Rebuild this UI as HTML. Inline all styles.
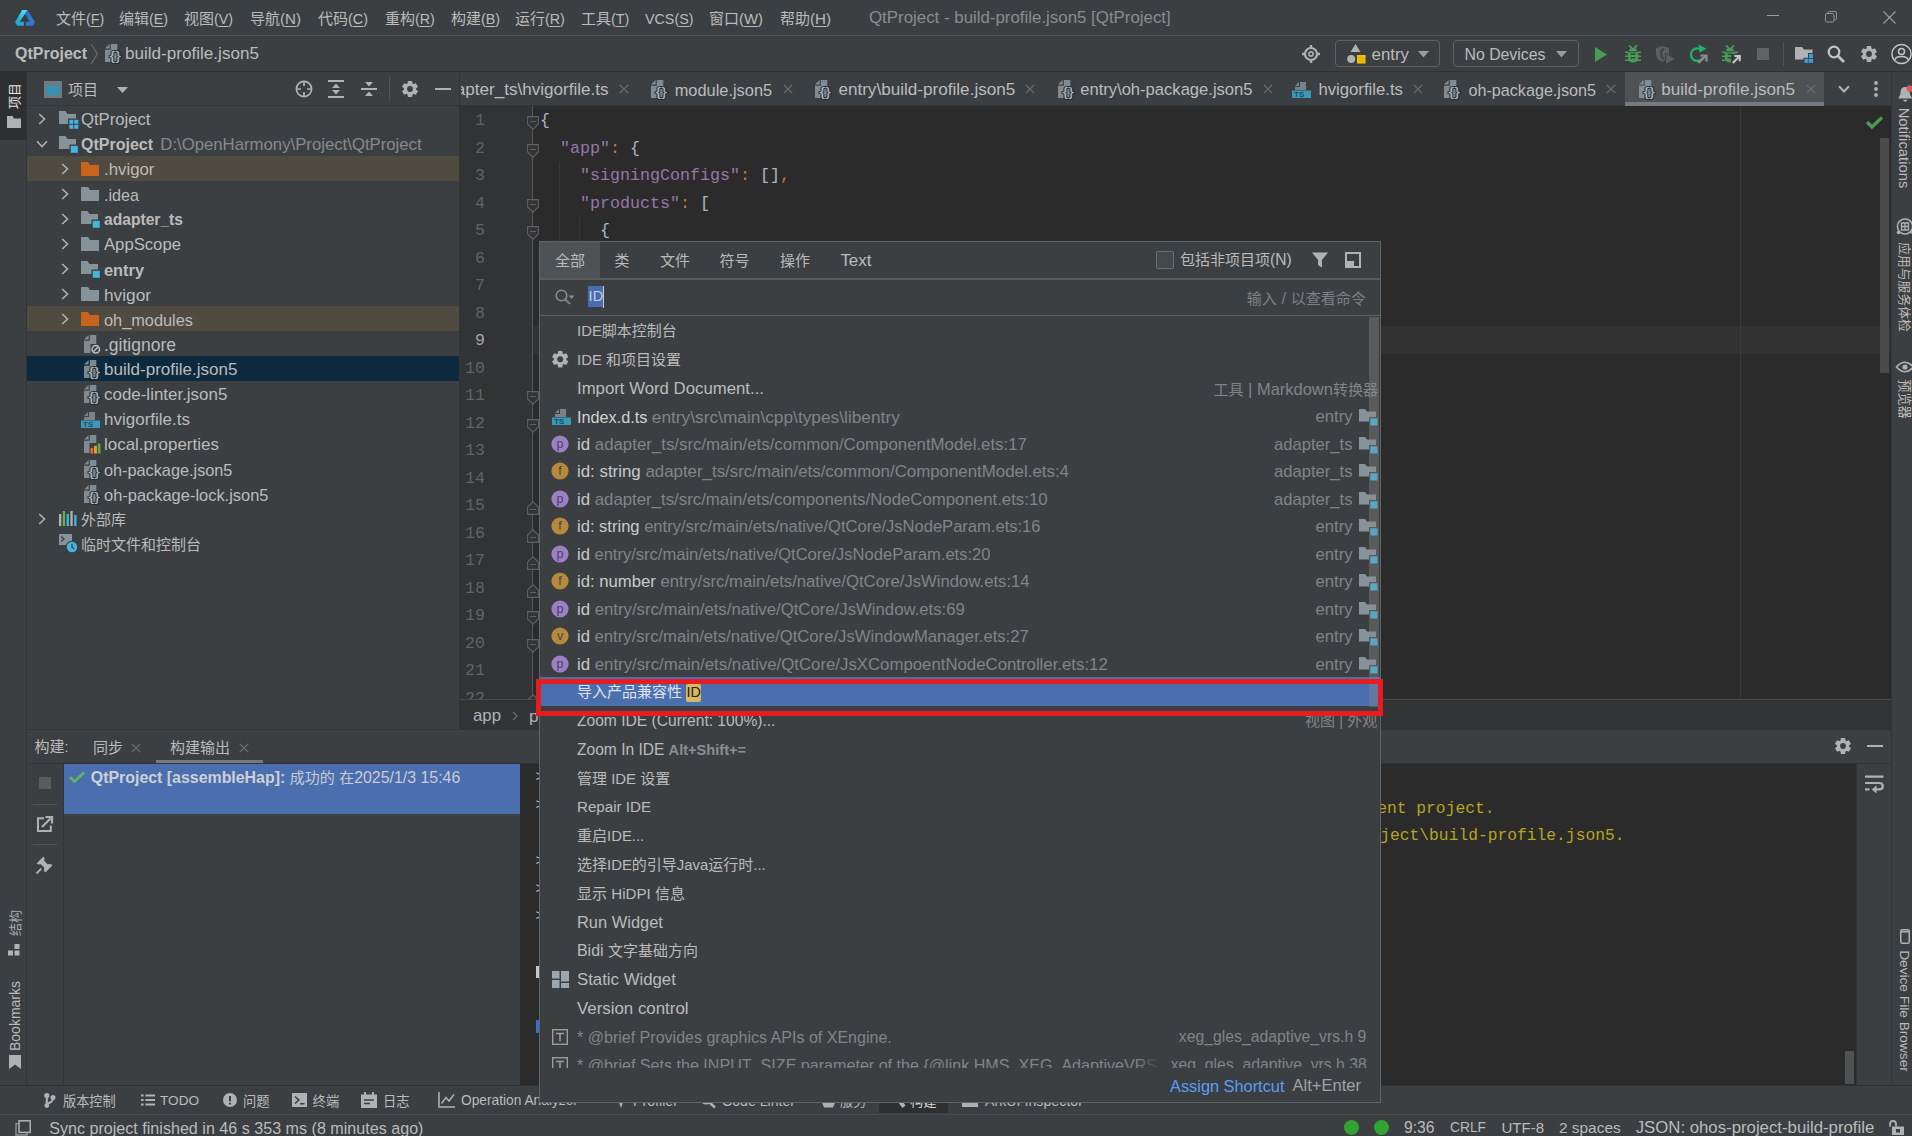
<!DOCTYPE html><html><head><meta charset="utf-8"><title>DevEco Studio</title><style>
html,body{margin:0;padding:0;}body{width:1912px;height:1136px;overflow:hidden;background:#3c3f41;position:relative;font-family:'Liberation Sans','Noto Sans CJK SC',sans-serif;}
div,svg,.t{position:absolute;}.t{white-space:pre;line-height:20px;height:20px;}svg{overflow:visible}

</style></head><body>
<div style="left:0px;top:0px;width:1912px;height:1136px;background:#3c3f41;"></div>
<div style="left:0px;top:35px;width:1912px;height:1px;background:#515355;"></div>
<div style="left:0px;top:71px;width:1912px;height:1px;background:#2f3133;"></div>
<svg style="left:8px;top:4px;" width="40" height="28" viewBox="0 0 40 28"><defs><linearGradient id="lgA" x1="0.6" y1="0" x2="0.2" y2="1"><stop offset="0" stop-color="#4be3ee"/><stop offset=".55" stop-color="#2bb4d4"/><stop offset="1" stop-color="#1a9fd8"/></linearGradient><linearGradient id="lgB" x1="0.2" y1="0" x2="0.6" y2="1"><stop offset="0" stop-color="#2672d8"/><stop offset=".6" stop-color="#2f7ad6"/><stop offset="1" stop-color="#3f6fd2"/></linearGradient></defs><path d="M14.2 5.9 L19.5 5.9 L17.0 9.85 L11.8 17.7 L15.8 17.7 L15.8 21.8 L9.1 21.8 L7.0 18.2 Z" fill="url(#lgA)"/><path d="M19.5 5.9 L27.0 18.2 L24.9 21.8 L18.0 21.8 L18.0 17.7 L21.9 17.7 L17.0 9.85 Z" fill="url(#lgB)"/></svg>
<span class="t" style="left:56px;top:9px;font-size:14.3px;"><span style="color:#bbbbbb;"><span style="font-size:15px">文件</span>(</span><span style="color:#bbbbbb;text-decoration:underline;text-underline-offset:1.5px;">F</span><span style="color:#bbbbbb;">)</span></span>
<span class="t" style="left:119px;top:9px;font-size:14.3px;"><span style="color:#bbbbbb;"><span style="font-size:15px">编辑</span>(</span><span style="color:#bbbbbb;text-decoration:underline;text-underline-offset:1.5px;">E</span><span style="color:#bbbbbb;">)</span></span>
<span class="t" style="left:184px;top:9px;font-size:14.3px;"><span style="color:#bbbbbb;"><span style="font-size:15px">视图</span>(</span><span style="color:#bbbbbb;text-decoration:underline;text-underline-offset:1.5px;">V</span><span style="color:#bbbbbb;">)</span></span>
<span class="t" style="left:250px;top:9px;font-size:15.11px;"><span style="color:#bbbbbb;"><span style="font-size:15px">导航</span>(</span><span style="color:#bbbbbb;text-decoration:underline;text-underline-offset:1.5px;">N</span><span style="color:#bbbbbb;">)</span></span>
<span class="t" style="left:318px;top:9px;font-size:14.39px;"><span style="color:#bbbbbb;"><span style="font-size:15px">代码</span>(</span><span style="color:#bbbbbb;text-decoration:underline;text-underline-offset:1.5px;">C</span><span style="color:#bbbbbb;">)</span></span>
<span class="t" style="left:385px;top:9px;font-size:14.3px;"><span style="color:#bbbbbb;"><span style="font-size:15px">重构</span>(</span><span style="color:#bbbbbb;text-decoration:underline;text-underline-offset:1.5px;">R</span><span style="color:#bbbbbb;">)</span></span>
<span class="t" style="left:451px;top:9px;font-size:14.3px;"><span style="color:#bbbbbb;"><span style="font-size:15px">构建</span>(</span><span style="color:#bbbbbb;text-decoration:underline;text-underline-offset:1.5px;">B</span><span style="color:#bbbbbb;">)</span></span>
<span class="t" style="left:515px;top:9px;font-size:14.3px;"><span style="color:#bbbbbb;"><span style="font-size:15px">运行</span>(</span><span style="color:#bbbbbb;text-decoration:underline;text-underline-offset:1.5px;">R</span><span style="color:#bbbbbb;">)</span></span>
<span class="t" style="left:581px;top:9px;font-size:14.3px;"><span style="color:#bbbbbb;"><span style="font-size:15px">工具</span>(</span><span style="color:#bbbbbb;text-decoration:underline;text-underline-offset:1.5px;">T</span><span style="color:#bbbbbb;">)</span></span>
<span class="t" style="left:645px;top:9px;font-size:14.3px;"><span style="color:#bbbbbb;">VCS(</span><span style="color:#bbbbbb;text-decoration:underline;text-underline-offset:1.5px;">S</span><span style="color:#bbbbbb;">)</span></span>
<span class="t" style="left:709px;top:9px;font-size:14.89px;"><span style="color:#bbbbbb;"><span style="font-size:15px">窗口</span>(</span><span style="color:#bbbbbb;text-decoration:underline;text-underline-offset:1.5px;">W</span><span style="color:#bbbbbb;">)</span></span>
<span class="t" style="left:780px;top:9px;font-size:15.11px;"><span style="color:#bbbbbb;"><span style="font-size:15px">帮助</span>(</span><span style="color:#bbbbbb;text-decoration:underline;text-underline-offset:1.5px;">H</span><span style="color:#bbbbbb;">)</span></span>
<span class="t" style="left:869px;top:8px;font-size:16.87px;"><span style="color:#8a8c8e;">QtProject - build-profile.json5 [QtProject]</span></span>
<div style="left:1767px;top:15px;width:12px;height:1px;background:#9a9c9e;"></div>
<svg style="left:1825px;top:11px;" width="12" height="12" viewBox="0 0 12 12"><rect x="0.5" y="2.5" width="8.5" height="8.5" rx="1.5" fill="none" stroke="#8f9193" stroke-width="1"/><path d="M3 2.5 V1.8 Q3 .5 4.3 .5 H10 Q11.5 .5 11.5 2 V7.5 Q11.5 9 10 9 H9" fill="none" stroke="#8f9193" stroke-width="1"/></svg>
<svg style="left:1883px;top:11px;" width="13" height="13" viewBox="0 0 13 13"><path d="M.5 .5 L12.5 12.5 M12.5 .5 L.5 12.5" stroke="#9a9c9e" stroke-width="1.1"/></svg>
<span class="t" style="left:15px;top:44px;font-size:16.0px;"><span style="color:#bbbbbb;font-weight:bold;">QtProject</span></span>
<svg style="left:90px;top:43px;" width="9" height="22" viewBox="0 0 9 22"><path d="M1 1 L7.5 11 L1 21" fill="none" stroke="#6b6e70" stroke-width="1.1"/></svg>
<svg style="left:104.8px;top:44px;" width="17" height="20" viewBox="0 0 17 20"><path d="M0 4.6 L4.6 0 V4.6 Z" fill="#87939a" opacity=".9"/><path d="M5.8 0 H12.3 V18 H0 V5.8 H5.8 Z" fill="#87939a" opacity=".9"/><text x="4.4" y="16.4" font-family="Liberation Sans,sans-serif" font-size="13" fill="#b2bbc1" stroke="#1f2a32" stroke-opacity=".75" stroke-width="2.1" paint-order="stroke" textLength="11.6" lengthAdjust="spacingAndGlyphs">{}</text></svg>
<span class="t" style="left:125px;top:44px;font-size:17.1px;"><span style="color:#bbbbbb;">build-profile.json5</span></span>
<svg style="left:1302px;top:45px;" width="18" height="18" viewBox="0 0 18 18"><circle cx="9" cy="9" r="6" fill="none" stroke="#afb1b3" stroke-width="2.2"/><circle cx="9" cy="9" r="2.1" fill="none" stroke="#afb1b3" stroke-width="1.6"/><path d="M9 0 V3 M9 15 V18 M0 9 H3 M15 9 H18" stroke="#afb1b3" stroke-width="2.4"/></svg>
<div style="left:1335px;top:40px;width:105px;height:27px;border:1px solid #5e6162;border-radius:4px;box-sizing:border-box;"></div>
<svg style="left:1347px;top:44px;" width="19" height="20" viewBox="0 0 19 20"><path d="M8.5 0 L13.5 8 H3.5 Z" fill="#afb1b3"/><circle cx="4.2" cy="15" r="4" fill="#afb1b3"/><rect x="10" y="11" width="8.5" height="8.5" fill="#f4c20d"/><rect x="11.5" y="12.5" width="5.5" height="5.5" fill="#e9b400"/></svg>
<span class="t" style="left:1371.5px;top:45px;font-size:16.86px;"><span style="color:#bbbbbb;">entry</span></span>
<svg style="left:1418px;top:51px;" width="11" height="6.5" viewBox="0 0 11 6.5"><path d="M0 0 H11 L5.5 6.5 Z" fill="#9a9da0"/></svg>
<div style="left:1453px;top:40px;width:126px;height:27px;border:1px solid #5e6162;border-radius:4px;box-sizing:border-box;"></div>
<span class="t" style="left:1464.5px;top:45px;font-size:15.84px;"><span style="color:#bbbbbb;">No Devices</span></span>
<svg style="left:1556px;top:51px;" width="11" height="6.5" viewBox="0 0 11 6.5"><path d="M0 0 H11 L5.5 6.5 Z" fill="#9a9da0"/></svg>
<svg style="left:1595px;top:47px;" width="12" height="15" viewBox="0 0 12 15"><path d="M0 0 L12 7.5 L0 15 Z" fill="#499c54"/></svg>
<svg style="left:1625px;top:45.2px;" width="16" height="18" viewBox="0 0 16 18"><path d="M4 0.4 L6.8 3.2 M12 0.4 L9.2 3.2" stroke="#499c54" stroke-width="1.7"/><path d="M4.1 6.2 Q4.1 2.7 8 2.7 Q11.9 2.7 11.9 6.2 Z" fill="#499c54"/><path d="M2.8 7.2 H13.2 V12 Q13.2 17.6 8 17.6 Q2.8 17.6 2.8 12 Z" fill="#499c54"/><path d="M0 7.2 H3.5 M0 11.2 H3.5 M0 15.2 H4 M16 7.2 H12.5 M16 11.2 H12.5 M16 15.2 H12" stroke="#499c54" stroke-width="1.6"/><path d="M5.6 9.2 H10.4 M5.6 12.8 H10.4" stroke="#3c3f41" stroke-width="1.5"/></svg>
<svg style="left:1656px;top:45.5px;" width="20" height="19" viewBox="0 0 20 19"><path d="M0 2 L6.5 0 L13 2 V8 Q13 13.5 6.5 15.8 Q0 13.5 0 8 Z" fill="#5b5e60"/><path d="M8.2 3 Q5.2 3.2 5.2 7.8 Q5.2 12.5 8.2 12.8" stroke="#3c3f41" stroke-width="2" fill="none"/><path d="M9.5 7.2 L19.5 13 L9.5 18.8 Z" fill="#5b5e60" stroke="#3c3f41" stroke-width="1"/></svg>
<svg style="left:1689px;top:44px;" width="19" height="20" viewBox="0 0 19 20"><path d="M13 6.5 A6.3 6.3 0 1 0 13.5 14" fill="none" stroke="#23b26b" stroke-width="2.2"/><path d="M9.5 0.5 L17.5 4.8 L10.5 8.6 Z" fill="#23b26b"/><path d="M9.5 19 L16 12.5 M11.5 11.5 H17.5 V17.5" stroke="#8c8e90" stroke-width="2.2" fill="none"/></svg>
<svg style="left:1722px;top:45.2px;" width="16" height="18" viewBox="0 0 16 18"><path d="M4 0.4 L6.8 3.2 M12 0.4 L9.2 3.2" stroke="#499c54" stroke-width="1.7"/><path d="M4.1 6.2 Q4.1 2.7 8 2.7 Q11.9 2.7 11.9 6.2 Z" fill="#499c54"/><path d="M2.8 7.2 H13.2 V12 Q13.2 17.6 8 17.6 Q2.8 17.6 2.8 12 Z" fill="#499c54"/><path d="M0 7.2 H3.5 M0 11.2 H3.5 M0 15.2 H4 M16 7.2 H12.5 M16 11.2 H12.5 M16 15.2 H12" stroke="#499c54" stroke-width="1.6"/><path d="M5.6 9.2 H10.4 M5.6 12.8 H10.4" stroke="#3c3f41" stroke-width="1.5"/></svg>
<svg style="left:1730.5px;top:54px;" width="10" height="10" viewBox="0 0 10 10"><rect x="0" y="0" width="10" height="10" fill="#3c3f41"/><path d="M1.8 9 L8 2.8 M3.5 2 H8.8 V7.3" stroke="#c4c6c8" stroke-width="2" fill="none"/></svg>
<div style="left:1757px;top:48px;width:12px;height:12px;background:#606365;"></div>
<div style="left:1783px;top:42px;width:1px;height:24px;background:#515355;"></div>
<svg style="left:1795px;top:47.3px;" width="19" height="18" viewBox="0 0 19 18"><path d="M0 0 H7 L9 2.5 H17.5 V6 H13 V10.8 H8.5 V12.6 H0 Z" fill="#afb1b3"/><rect x="14" y="7" width="4" height="4" fill="#389fd6"/><rect x="9.5" y="11.8" width="4" height="4" fill="#389fd6"/><rect x="14" y="11.8" width="4" height="4" fill="#389fd6"/></svg>
<svg style="left:1827px;top:45px;" width="18" height="18" viewBox="0 0 18 18"><circle cx="7" cy="7" r="5.3" fill="none" stroke="#c1c3c5" stroke-width="2.2"/><path d="M11 11 L17 17" stroke="#c1c3c5" stroke-width="2.6"/></svg>
<svg style="left:1860.5px;top:46px;" width="16" height="16" viewBox="0 0 16 16"><g transform="translate(8,8)"><path d="M-2.1 -8 H2.1 L2.7 -4.4 H-2.7 Z" transform="rotate(0)" fill="#afb1b3"/><path d="M-2.1 -8 H2.1 L2.7 -4.4 H-2.7 Z" transform="rotate(60)" fill="#afb1b3"/><path d="M-2.1 -8 H2.1 L2.7 -4.4 H-2.7 Z" transform="rotate(120)" fill="#afb1b3"/><path d="M-2.1 -8 H2.1 L2.7 -4.4 H-2.7 Z" transform="rotate(180)" fill="#afb1b3"/><path d="M-2.1 -8 H2.1 L2.7 -4.4 H-2.7 Z" transform="rotate(240)" fill="#afb1b3"/><path d="M-2.1 -8 H2.1 L2.7 -4.4 H-2.7 Z" transform="rotate(300)" fill="#afb1b3"/><circle r="5.92" fill="#afb1b3"/><circle r="2.88" fill="#3c3f41"/></g></svg>
<svg style="left:1891px;top:43px;" width="22" height="22" viewBox="0 0 22 22"><circle cx="10.5" cy="11" r="9.6" fill="none" stroke="#c1c3c5" stroke-width="1.5"/><circle cx="10.5" cy="8.5" r="3" fill="none" stroke="#c1c3c5" stroke-width="1.5"/><path d="M4 17 Q4.5 13.5 10.5 13.5 Q16.5 13.5 17 17" fill="none" stroke="#c1c3c5" stroke-width="1.5"/></svg>
<div style="left:0px;top:72px;width:26px;height:68px;background:#2d2f30;"></div>
<div style="left:26px;top:72px;width:1px;height:1013px;background:#323537;"></div>
<span class="t" style="left:4px;top:96px;width:20px;text-align:center;transform:rotate(-90deg);transform-origin:10px 10px;font-size:13px;color:#e6e6e6;height:20px;width:28px;left:1px;transform-origin:14px 10px;top:86px;">项目</span>
<svg style="left:7px;top:116px;" width="14" height="12" viewBox="0 0 14 12"><path d="M0 0 H5.5 L7 2.5 H14 V12 H0 Z" fill="#afb1b3"/></svg>
<span class="t" style="left:0.5px;top:913px;width:30px;text-align:center;transform:rotate(-90deg);transform-origin:15px 10px;font-size:13px;color:#a8aaac;">结构</span>
<svg style="left:8px;top:944px;" width="12" height="12" viewBox="0 0 12 12"><rect x="6.5" y="0" width="5" height="5" fill="#afb1b3"/><rect x="0" y="6.5" width="5" height="5" fill="#afb1b3"/><rect x="6.5" y="6.5" width="5" height="5" fill="#afb1b3"/></svg>
<span class="t" style="left:-20px;top:1005.5px;width:70px;text-align:center;transform:rotate(-90deg);transform-origin:35px 10px;font-size:14px;color:#bbbbbb;">Bookmarks</span>
<svg style="left:9px;top:1055px;" width="12" height="14" viewBox="0 0 12 14"><path d="M0 0 H12 V14 L6 9.5 L0 14 Z" fill="#afb1b3"/></svg>
<div style="left:27px;top:105px;width:433px;height:1px;background:#323537;"></div>
<svg style="left:44px;top:81px;" width="18" height="17" viewBox="0 0 18 17"><rect x="0" y="0" width="18" height="17" fill="#6e7b85"/><rect x="2.5" y="5" width="13" height="9" fill="#3592b4"/></svg>
<span class="t" style="left:68px;top:79px;font-size:16.5px;"><span style="color:#bbbbbb;"><span style="font-size:15px">项目</span></span></span>
<svg style="left:117px;top:86.5px;" width="11" height="6" viewBox="0 0 11 6"><path d="M0 0 H11 L5.5 6 Z" fill="#afb1b3"/></svg>
<svg style="left:295px;top:80px;" width="18" height="18" viewBox="0 0 18 18"><circle cx="9" cy="9" r="7.6" fill="none" stroke="#afb1b3" stroke-width="1.7"/><path d="M9 1 V6 M9 12 V17 M1 9 H6 M12 9 H17" stroke="#afb1b3" stroke-width="1.7"/></svg>
<svg style="left:328px;top:80px;" width="16" height="18" viewBox="0 0 16 18"><path d="M0 1 H16 M0 17 H16" stroke="#afb1b3" stroke-width="2"/><path d="M8 3.5 L12 8 H4 Z M8 14.5 L12 10 H4 Z" fill="#afb1b3"/></svg>
<svg style="left:361px;top:80px;" width="16" height="18" viewBox="0 0 16 18"><path d="M0 9 H16" stroke="#afb1b3" stroke-width="2"/><path d="M8 6.5 L12 2 H4 Z M8 11.5 L12 16 H4 Z" fill="#afb1b3"/></svg>
<div style="left:389px;top:77px;width:1px;height:24px;background:#515355;"></div>
<svg style="left:402px;top:81px;" width="16" height="16" viewBox="0 0 16 16"><g transform="translate(8,8)"><path d="M-2.1 -8 H2.1 L2.7 -4.4 H-2.7 Z" transform="rotate(0)" fill="#afb1b3"/><path d="M-2.1 -8 H2.1 L2.7 -4.4 H-2.7 Z" transform="rotate(60)" fill="#afb1b3"/><path d="M-2.1 -8 H2.1 L2.7 -4.4 H-2.7 Z" transform="rotate(120)" fill="#afb1b3"/><path d="M-2.1 -8 H2.1 L2.7 -4.4 H-2.7 Z" transform="rotate(180)" fill="#afb1b3"/><path d="M-2.1 -8 H2.1 L2.7 -4.4 H-2.7 Z" transform="rotate(240)" fill="#afb1b3"/><path d="M-2.1 -8 H2.1 L2.7 -4.4 H-2.7 Z" transform="rotate(300)" fill="#afb1b3"/><circle r="5.92" fill="#afb1b3"/><circle r="2.88" fill="#3c3f41"/></g></svg>
<div style="left:435px;top:88px;width:16px;height:2px;background:#afb1b3;"></div>
<div style="left:27px;top:155.5px;width:432px;height:25px;background:#4f4b41;"></div>
<div style="left:27px;top:305.5px;width:432px;height:25px;background:#4f4b41;"></div>
<div style="left:27px;top:355.5px;width:432px;height:25px;background:#0d293e;"></div>
<div style="left:459px;top:72px;width:1px;height:657px;background:#323537;"></div>
<svg style="left:37.5px;top:113px;" width="8" height="12" viewBox="0 0 8 12"><path d="M1.2 1 L6.5 6 L1.2 11" fill="none" stroke="#afb1b3" stroke-width="1.6"/></svg>
<svg style="left:59px;top:111px;" width="19" height="18" viewBox="0 0 19 18"><path d="M0 0 H6.5 L8.5 3 H17 V13 H0 Z" fill="#87939a"/><rect x="9" y="7.5" width="11" height="11" fill="#3c3f41"/><rect x="10.3" y="8.8" width="4" height="4" fill="#40b6e0"/><rect x="15.3" y="8.8" width="4" height="4" fill="#40b6e0"/><rect x="10.3" y="13.8" width="4" height="4" fill="#40b6e0"/><rect x="15.3" y="13.8" width="4" height="4" fill="#40b6e0"/></svg>
<span class="t" style="left:81px;top:110px;font-size:16.67px;"><span style="color:#bbbbbb;">QtProject</span></span>
<svg style="left:36px;top:140px;" width="12" height="8" viewBox="0 0 12 8"><path d="M1 1.2 L6 6.5 L11 1.2" fill="none" stroke="#afb1b3" stroke-width="1.6"/></svg>
<svg style="left:59px;top:136px;" width="19" height="17" viewBox="0 0 19 17"><path d="M0 0 H6.5 L8.5 3 H17 V13 H0 Z" fill="#87939a"/><rect x="10.5" y="8.5" width="9" height="9" fill="#3c3f41"/><rect x="11.8" y="9.8" width="7" height="7" fill="#40b6e0"/></svg>
<span class="t" style="left:81px;top:135px;font-size:16.0px;"><span style="color:#bbbbbb;font-weight:bold;">QtProject</span></span>
<span class="t" style="left:160.3px;top:135px;font-size:16.74px;"><span style="color:#868a8c;">D:\OpenHarmony\Project\QtProject</span></span>
<svg style="left:60.5px;top:163px;" width="8" height="12" viewBox="0 0 8 12"><path d="M1.2 1 L6.5 6 L1.2 11" fill="none" stroke="#afb1b3" stroke-width="1.6"/></svg>
<svg style="left:81px;top:162px;" width="18" height="14" viewBox="0 0 18 14"><path d="M0 0 H7 L9 3 H18 V14 H0 Z" fill="#c8641e"/></svg>
<span class="t" style="left:104px;top:160px;font-size:16.82px;"><span style="color:#bbbbbb;">.hvigor</span></span>
<svg style="left:60.5px;top:188px;" width="8" height="12" viewBox="0 0 8 12"><path d="M1.2 1 L6.5 6 L1.2 11" fill="none" stroke="#afb1b3" stroke-width="1.6"/></svg>
<svg style="left:81px;top:187px;" width="18" height="14" viewBox="0 0 18 14"><path d="M0 0 H7 L9 3 H18 V14 H0 Z" fill="#87939a"/></svg>
<span class="t" style="left:104px;top:185px;font-size:16.14px;"><span style="color:#bbbbbb;">.idea</span></span>
<svg style="left:60.5px;top:213px;" width="8" height="12" viewBox="0 0 8 12"><path d="M1.2 1 L6.5 6 L1.2 11" fill="none" stroke="#afb1b3" stroke-width="1.6"/></svg>
<svg style="left:81px;top:211px;" width="19" height="17" viewBox="0 0 19 17"><path d="M0 0 H6.5 L8.5 3 H17 V13 H0 Z" fill="#87939a"/><rect x="10.5" y="8.5" width="9" height="9" fill="#3c3f41"/><rect x="11.8" y="9.8" width="7" height="7" fill="#40b6e0"/></svg>
<span class="t" style="left:104px;top:210px;font-size:15.62px;"><span style="color:#bbbbbb;font-weight:bold;">adapter_ts</span></span>
<svg style="left:60.5px;top:238px;" width="8" height="12" viewBox="0 0 8 12"><path d="M1.2 1 L6.5 6 L1.2 11" fill="none" stroke="#afb1b3" stroke-width="1.6"/></svg>
<svg style="left:81px;top:237px;" width="18" height="14" viewBox="0 0 18 14"><path d="M0 0 H7 L9 3 H18 V14 H0 Z" fill="#87939a"/></svg>
<span class="t" style="left:104px;top:235px;font-size:16.68px;"><span style="color:#bbbbbb;">AppScope</span></span>
<svg style="left:60.5px;top:263px;" width="8" height="12" viewBox="0 0 8 12"><path d="M1.2 1 L6.5 6 L1.2 11" fill="none" stroke="#afb1b3" stroke-width="1.6"/></svg>
<svg style="left:81px;top:261px;" width="19" height="17" viewBox="0 0 19 17"><path d="M0 0 H6.5 L8.5 3 H17 V13 H0 Z" fill="#87939a"/><rect x="10.5" y="8.5" width="9" height="9" fill="#3c3f41"/><rect x="11.8" y="9.8" width="7" height="7" fill="#40b6e0"/></svg>
<span class="t" style="left:104px;top:260px;font-size:16.36px;"><span style="color:#bbbbbb;font-weight:bold;">entry</span></span>
<svg style="left:60.5px;top:288px;" width="8" height="12" viewBox="0 0 8 12"><path d="M1.2 1 L6.5 6 L1.2 11" fill="none" stroke="#afb1b3" stroke-width="1.6"/></svg>
<svg style="left:81px;top:287px;" width="18" height="14" viewBox="0 0 18 14"><path d="M0 0 H7 L9 3 H18 V14 H0 Z" fill="#87939a"/></svg>
<span class="t" style="left:104px;top:285px;font-size:17.26px;"><span style="color:#bbbbbb;">hvigor</span></span>
<svg style="left:60.5px;top:313px;" width="8" height="12" viewBox="0 0 8 12"><path d="M1.2 1 L6.5 6 L1.2 11" fill="none" stroke="#afb1b3" stroke-width="1.6"/></svg>
<svg style="left:81px;top:312px;" width="18" height="14" viewBox="0 0 18 14"><path d="M0 0 H7 L9 3 H18 V14 H0 Z" fill="#c8641e"/></svg>
<span class="t" style="left:104px;top:310px;font-size:16.34px;"><span style="color:#bbbbbb;">oh_modules</span></span>
<svg style="left:83.9px;top:335px;" width="17" height="20" viewBox="0 0 17 20"><path d="M0 4.6 L4.6 0 V4.6 Z" fill="#87939a" opacity=".9"/><path d="M5.8 0 H12.3 V9 H6.5 V18 H0 V5.8 H5.8 Z" fill="#87939a" opacity=".9"/><circle cx="11.8" cy="14.3" r="3.7" fill="none" stroke="#b9bfc3" stroke-width="1.5"/><path d="M9.3 16.8 L14.3 11.8" stroke="#b9bfc3" stroke-width="1.5"/></svg>
<span class="t" style="left:104px;top:335px;font-size:17.5px;"><span style="color:#bbbbbb;">.gitignore</span></span>
<svg style="left:83.9px;top:360px;" width="17" height="20" viewBox="0 0 17 20"><path d="M0 4.6 L4.6 0 V4.6 Z" fill="#87939a" opacity=".9"/><path d="M5.8 0 H12.3 V18 H0 V5.8 H5.8 Z" fill="#87939a" opacity=".9"/><text x="4.4" y="16.4" font-family="Liberation Sans,sans-serif" font-size="13" fill="#b2bbc1" stroke="#1f2a32" stroke-opacity=".75" stroke-width="2.1" paint-order="stroke" textLength="11.6" lengthAdjust="spacingAndGlyphs">{}</text></svg>
<span class="t" style="left:104px;top:360px;font-size:17.05px;"><span style="color:#bbbbbb;">build-profile.json5</span></span>
<svg style="left:83.9px;top:385px;" width="17" height="20" viewBox="0 0 17 20"><path d="M0 4.6 L4.6 0 V4.6 Z" fill="#87939a" opacity=".9"/><path d="M5.8 0 H12.3 V18 H0 V5.8 H5.8 Z" fill="#87939a" opacity=".9"/><text x="4.4" y="16.4" font-family="Liberation Sans,sans-serif" font-size="13" fill="#b2bbc1" stroke="#1f2a32" stroke-opacity=".75" stroke-width="2.1" paint-order="stroke" textLength="11.6" lengthAdjust="spacingAndGlyphs">{}</text></svg>
<span class="t" style="left:104px;top:385px;font-size:16.96px;"><span style="color:#bbbbbb;">code-linter.json5</span></span>
<svg style="left:81px;top:411px;" width="19" height="17" viewBox="0 0 19 17"><path d="M3 5 L7 1 L7 5 Z" fill="#87939a" opacity=".8"/><path d="M8 1 H14 V9 H3 V6 H8 Z" fill="#87939a" opacity=".8"/><rect x="0" y="9.5" width="19" height="7.5" fill="#3d98b8"/><text x="2" y="16.3" font-family="Liberation Sans,sans-serif" font-size="8" font-weight="bold" fill="#1f4e63">TS</text></svg>
<span class="t" style="left:104px;top:410px;font-size:17.0px;"><span style="color:#bbbbbb;">hvigorfile.ts</span></span>
<svg style="left:83.9px;top:435px;" width="17" height="20" viewBox="0 0 17 20"><path d="M0 4.6 L4.6 0 V4.6 Z" fill="#87939a" opacity=".9"/><path d="M5.8 0 H12.3 V8 H5.5 V18 H0 V5.8 H5.8 Z" fill="#87939a" opacity=".9"/><rect x="6.5" y="13" width="2.8" height="5.5" fill="#e8622c"/><rect x="10.1" y="10.8" width="2.8" height="7.7" fill="#e8a12c"/><rect x="13.7" y="8.5" width="2.8" height="10" fill="#5aa84f"/></svg>
<span class="t" style="left:104px;top:435px;font-size:16.96px;"><span style="color:#bbbbbb;">local.properties</span></span>
<svg style="left:83.9px;top:460px;" width="17" height="20" viewBox="0 0 17 20"><path d="M0 4.6 L4.6 0 V4.6 Z" fill="#87939a" opacity=".9"/><path d="M5.8 0 H12.3 V18 H0 V5.8 H5.8 Z" fill="#87939a" opacity=".9"/><text x="4.4" y="16.4" font-family="Liberation Sans,sans-serif" font-size="13" fill="#b2bbc1" stroke="#1f2a32" stroke-opacity=".75" stroke-width="2.1" paint-order="stroke" textLength="11.6" lengthAdjust="spacingAndGlyphs">{}</text></svg>
<span class="t" style="left:104px;top:460px;font-size:16.28px;"><span style="color:#bbbbbb;">oh-package.json5</span></span>
<svg style="left:83.9px;top:485px;" width="17" height="20" viewBox="0 0 17 20"><path d="M0 4.6 L4.6 0 V4.6 Z" fill="#87939a" opacity=".9"/><path d="M5.8 0 H12.3 V18 H0 V5.8 H5.8 Z" fill="#87939a" opacity=".9"/><text x="4.4" y="16.4" font-family="Liberation Sans,sans-serif" font-size="13" fill="#b2bbc1" stroke="#1f2a32" stroke-opacity=".75" stroke-width="2.1" paint-order="stroke" textLength="11.6" lengthAdjust="spacingAndGlyphs">{}</text></svg>
<span class="t" style="left:104px;top:485px;font-size:16.44px;"><span style="color:#bbbbbb;">oh-package-lock.json5</span></span>
<svg style="left:37.5px;top:513px;" width="8" height="12" viewBox="0 0 8 12"><path d="M1.2 1 L6.5 6 L1.2 11" fill="none" stroke="#afb1b3" stroke-width="1.6"/></svg>
<svg style="left:59px;top:511px;" width="18" height="15" viewBox="0 0 18 15"><rect x="0" y="3" width="2.3" height="12" fill="#afb1b3"/><rect x="3.8" y="0" width="2.3" height="15" fill="#62b543"/><rect x="7.6" y="3" width="2.3" height="12" fill="#40b6e0"/><rect x="11.4" y="0" width="2.3" height="15" fill="#afb1b3"/><rect x="15.2" y="4" width="2.3" height="11" fill="#40b6e0"/></svg>
<span class="t" style="left:81px;top:509px;font-size:16.5px;"><span style="color:#bbbbbb;"><span style="font-size:15px">外部库</span></span></span>
<svg style="left:59px;top:534px;" width="19" height="19" viewBox="0 0 19 19"><rect x="0" y="0" width="13" height="11" fill="#87939a"/><path d="M2 2.5 L5 5 L2 7.5" stroke="#3c3f41" stroke-width="1.3" fill="none"/><circle cx="13" cy="13" r="6.2" fill="#3c3f41"/><circle cx="13" cy="13" r="5.2" fill="#40b6e0"/><path d="M13 9.8 V13.3 L15.3 14.8" stroke="#3c3f41" stroke-width="1.3" fill="none"/></svg>
<span class="t" style="left:81px;top:534px;font-size:16.5px;"><span style="color:#bbbbbb;"><span style="font-size:15px">临时文件和控制台</span></span></span>
<div style="left:460px;top:72px;width:1432px;height:34px;background:#3c3f41;"></div>
<div style="left:460px;top:104.5px;width:1431px;height:1.5px;background:#323537;"></div>
<div style="left:1625px;top:72px;width:199px;height:30.5px;background:#4e5254;"></div>
<div style="left:1625px;top:102.3px;width:199px;height:3.7px;background:#747a80;"></div>
<div style="left:461px;top:72px;width:180px;height:33px;overflow:hidden">
<span class="t" style="right:32.40000000000009px;top:8px;font-size:17.09px;"><span style="color:#bbbbbb;">adapter_ts\hvigorfile.ts</span></span>
</div>
<svg style="left:619px;top:84px;" width="10" height="10" viewBox="0 0 10 10"><path d="M0.7999999999999998 0.7999999999999998 L9.2 9.2 M9.2 0.7999999999999998 L0.7999999999999998 9.2" stroke="#6e6e6e" stroke-width="1.2" fill="none"/></svg>
<svg style="left:651px;top:80px;" width="17" height="20" viewBox="0 0 17 20"><path d="M0 4.6 L4.6 0 V4.6 Z" fill="#87939a" opacity=".9"/><path d="M5.8 0 H12.3 V18 H0 V5.8 H5.8 Z" fill="#87939a" opacity=".9"/><text x="4.4" y="16.4" font-family="Liberation Sans,sans-serif" font-size="13" fill="#b2bbc1" stroke="#1f2a32" stroke-opacity=".75" stroke-width="2.1" paint-order="stroke" textLength="11.6" lengthAdjust="spacingAndGlyphs">{}</text></svg>
<span class="t" style="left:674.7px;top:80px;font-size:16.39px;"><span style="color:#bbbbbb;">module.json5</span></span>
<svg style="left:783px;top:84px;" width="10" height="10" viewBox="0 0 10 10"><path d="M0.7999999999999998 0.7999999999999998 L9.2 9.2 M9.2 0.7999999999999998 L0.7999999999999998 9.2" stroke="#6e6e6e" stroke-width="1.2" fill="none"/></svg>
<svg style="left:815px;top:80px;" width="17" height="20" viewBox="0 0 17 20"><path d="M0 4.6 L4.6 0 V4.6 Z" fill="#87939a" opacity=".9"/><path d="M5.8 0 H12.3 V18 H0 V5.8 H5.8 Z" fill="#87939a" opacity=".9"/><text x="4.4" y="16.4" font-family="Liberation Sans,sans-serif" font-size="13" fill="#b2bbc1" stroke="#1f2a32" stroke-opacity=".75" stroke-width="2.1" paint-order="stroke" textLength="11.6" lengthAdjust="spacingAndGlyphs">{}</text></svg>
<span class="t" style="left:838.4px;top:80px;font-size:17.12px;"><span style="color:#bbbbbb;">entry\build-profile.json5</span></span>
<svg style="left:1025px;top:84px;" width="10" height="10" viewBox="0 0 10 10"><path d="M0.7999999999999998 0.7999999999999998 L9.2 9.2 M9.2 0.7999999999999998 L0.7999999999999998 9.2" stroke="#6e6e6e" stroke-width="1.2" fill="none"/></svg>
<svg style="left:1058px;top:80px;" width="17" height="20" viewBox="0 0 17 20"><path d="M0 4.6 L4.6 0 V4.6 Z" fill="#87939a" opacity=".9"/><path d="M5.8 0 H12.3 V18 H0 V5.8 H5.8 Z" fill="#87939a" opacity=".9"/><text x="4.4" y="16.4" font-family="Liberation Sans,sans-serif" font-size="13" fill="#b2bbc1" stroke="#1f2a32" stroke-opacity=".75" stroke-width="2.1" paint-order="stroke" textLength="11.6" lengthAdjust="spacingAndGlyphs">{}</text></svg>
<span class="t" style="left:1080.2px;top:80px;font-size:16.58px;"><span style="color:#bbbbbb;">entry\oh-package.json5</span></span>
<svg style="left:1263px;top:84px;" width="10" height="10" viewBox="0 0 10 10"><path d="M0.7999999999999998 0.7999999999999998 L9.2 9.2 M9.2 0.7999999999999998 L0.7999999999999998 9.2" stroke="#6e6e6e" stroke-width="1.2" fill="none"/></svg>
<svg style="left:1292px;top:81px;" width="19" height="17" viewBox="0 0 19 17"><path d="M3 5 L7 1 L7 5 Z" fill="#87939a" opacity=".8"/><path d="M8 1 H14 V9 H3 V6 H8 Z" fill="#87939a" opacity=".8"/><rect x="0" y="9.5" width="19" height="7.5" fill="#3d98b8"/><text x="2" y="16.3" font-family="Liberation Sans,sans-serif" font-size="8" font-weight="bold" fill="#1f4e63">TS</text></svg>
<span class="t" style="left:1318.4px;top:80px;font-size:16.73px;"><span style="color:#bbbbbb;">hvigorfile.ts</span></span>
<svg style="left:1412.8px;top:84px;" width="10" height="10" viewBox="0 0 10 10"><path d="M0.7999999999999998 0.7999999999999998 L9.2 9.2 M9.2 0.7999999999999998 L0.7999999999999998 9.2" stroke="#6e6e6e" stroke-width="1.2" fill="none"/></svg>
<svg style="left:1444px;top:80px;" width="17" height="20" viewBox="0 0 17 20"><path d="M0 4.6 L4.6 0 V4.6 Z" fill="#87939a" opacity=".9"/><path d="M5.8 0 H12.3 V18 H0 V5.8 H5.8 Z" fill="#87939a" opacity=".9"/><text x="4.4" y="16.4" font-family="Liberation Sans,sans-serif" font-size="13" fill="#b2bbc1" stroke="#1f2a32" stroke-opacity=".75" stroke-width="2.1" paint-order="stroke" textLength="11.6" lengthAdjust="spacingAndGlyphs">{}</text></svg>
<span class="t" style="left:1468.5px;top:80px;font-size:16.15px;"><span style="color:#bbbbbb;">oh-package.json5</span></span>
<svg style="left:1606px;top:84px;" width="10" height="10" viewBox="0 0 10 10"><path d="M0.7999999999999998 0.7999999999999998 L9.2 9.2 M9.2 0.7999999999999998 L0.7999999999999998 9.2" stroke="#6e6e6e" stroke-width="1.2" fill="none"/></svg>
<svg style="left:1639px;top:80px;" width="17" height="20" viewBox="0 0 17 20"><path d="M0 4.6 L4.6 0 V4.6 Z" fill="#87939a" opacity=".9"/><path d="M5.8 0 H12.3 V18 H0 V5.8 H5.8 Z" fill="#87939a" opacity=".9"/><text x="4.4" y="16.4" font-family="Liberation Sans,sans-serif" font-size="13" fill="#b2bbc1" stroke="#1f2a32" stroke-opacity=".75" stroke-width="2.1" paint-order="stroke" textLength="11.6" lengthAdjust="spacingAndGlyphs">{}</text></svg>
<span class="t" style="left:1661.3px;top:80px;font-size:17.06px;"><span style="color:#bbbbbb;">build-profile.json5</span></span>
<svg style="left:1806px;top:84px;" width="10" height="10" viewBox="0 0 10 10"><path d="M0.7999999999999998 0.7999999999999998 L9.2 9.2 M9.2 0.7999999999999998 L0.7999999999999998 9.2" stroke="#6e6e6e" stroke-width="1.2" fill="none"/></svg>
<svg style="left:1838px;top:84.8px;" width="12" height="8" viewBox="0 0 12 8"><path d="M1 1.2 L6 6.5 L11 1.2" fill="none" stroke="#afb1b3" stroke-width="2"/></svg>
<svg style="left:1874px;top:81.3px;" width="4" height="4" viewBox="0 0 4 4"><circle cx="2" cy="2" r="1.9" fill="#afb1b3"/></svg>
<svg style="left:1874px;top:87px;" width="4" height="4" viewBox="0 0 4 4"><circle cx="2" cy="2" r="1.9" fill="#afb1b3"/></svg>
<svg style="left:1874px;top:92.6px;" width="4" height="4" viewBox="0 0 4 4"><circle cx="2" cy="2" r="1.9" fill="#afb1b3"/></svg>
<div style="left:460px;top:106px;width:1431px;height:593px;background:#2b2b2b;"></div>
<div style="left:460px;top:106px;width:72px;height:593px;background:#313335;"></div>
<div style="left:532px;top:106px;width:1px;height:593px;background:#555555;"></div>
<div style="left:533px;top:326px;width:1358px;height:27.5px;background:#323232;"></div>
<div style="left:1740px;top:106px;width:1px;height:593px;background:#3a3a3a;"></div>
<div style="left:559px;top:162px;width:1px;height:537px;background:#373737;"></div>
<div style="left:579px;top:217px;width:1px;height:482px;background:#373737;"></div>
<span class="t" style="right:1427px;top:110.5px;font-size:16.6px;font-family:'Liberation Mono','Noto Sans CJK SC',monospace;"><span style="color:#606366;">1</span></span>
<span class="t" style="right:1427px;top:138.5px;font-size:16.6px;font-family:'Liberation Mono','Noto Sans CJK SC',monospace;"><span style="color:#606366;">2</span></span>
<span class="t" style="right:1427px;top:165.5px;font-size:16.6px;font-family:'Liberation Mono','Noto Sans CJK SC',monospace;"><span style="color:#606366;">3</span></span>
<span class="t" style="right:1427px;top:193.5px;font-size:16.6px;font-family:'Liberation Mono','Noto Sans CJK SC',monospace;"><span style="color:#606366;">4</span></span>
<span class="t" style="right:1427px;top:220.5px;font-size:16.6px;font-family:'Liberation Mono','Noto Sans CJK SC',monospace;"><span style="color:#606366;">5</span></span>
<span class="t" style="right:1427px;top:248.5px;font-size:16.6px;font-family:'Liberation Mono','Noto Sans CJK SC',monospace;"><span style="color:#606366;">6</span></span>
<span class="t" style="right:1427px;top:275.5px;font-size:16.6px;font-family:'Liberation Mono','Noto Sans CJK SC',monospace;"><span style="color:#606366;">7</span></span>
<span class="t" style="right:1427px;top:303.5px;font-size:16.6px;font-family:'Liberation Mono','Noto Sans CJK SC',monospace;"><span style="color:#606366;">8</span></span>
<span class="t" style="right:1427px;top:330.5px;font-size:16.6px;font-family:'Liberation Mono','Noto Sans CJK SC',monospace;"><span style="color:#a4a3a3;">9</span></span>
<span class="t" style="right:1427px;top:358.5px;font-size:16.6px;font-family:'Liberation Mono','Noto Sans CJK SC',monospace;"><span style="color:#606366;">10</span></span>
<span class="t" style="right:1427px;top:385.5px;font-size:16.6px;font-family:'Liberation Mono','Noto Sans CJK SC',monospace;"><span style="color:#606366;">11</span></span>
<span class="t" style="right:1427px;top:413.5px;font-size:16.6px;font-family:'Liberation Mono','Noto Sans CJK SC',monospace;"><span style="color:#606366;">12</span></span>
<span class="t" style="right:1427px;top:440.5px;font-size:16.6px;font-family:'Liberation Mono','Noto Sans CJK SC',monospace;"><span style="color:#606366;">13</span></span>
<span class="t" style="right:1427px;top:468.5px;font-size:16.6px;font-family:'Liberation Mono','Noto Sans CJK SC',monospace;"><span style="color:#606366;">14</span></span>
<span class="t" style="right:1427px;top:495.5px;font-size:16.6px;font-family:'Liberation Mono','Noto Sans CJK SC',monospace;"><span style="color:#606366;">15</span></span>
<span class="t" style="right:1427px;top:523.5px;font-size:16.6px;font-family:'Liberation Mono','Noto Sans CJK SC',monospace;"><span style="color:#606366;">16</span></span>
<span class="t" style="right:1427px;top:550.5px;font-size:16.6px;font-family:'Liberation Mono','Noto Sans CJK SC',monospace;"><span style="color:#606366;">17</span></span>
<span class="t" style="right:1427px;top:578.5px;font-size:16.6px;font-family:'Liberation Mono','Noto Sans CJK SC',monospace;"><span style="color:#606366;">18</span></span>
<span class="t" style="right:1427px;top:605.5px;font-size:16.6px;font-family:'Liberation Mono','Noto Sans CJK SC',monospace;"><span style="color:#606366;">19</span></span>
<span class="t" style="right:1427px;top:633.5px;font-size:16.6px;font-family:'Liberation Mono','Noto Sans CJK SC',monospace;"><span style="color:#606366;">20</span></span>
<span class="t" style="right:1427px;top:660.5px;font-size:16.6px;font-family:'Liberation Mono','Noto Sans CJK SC',monospace;"><span style="color:#606366;">21</span></span>
<span class="t" style="right:1427px;top:688.5px;font-size:16.6px;font-family:'Liberation Mono','Noto Sans CJK SC',monospace;"><span style="color:#606366;">22</span></span>
<svg style="left:526.5px;top:115.5px;" width="12" height="14" viewBox="0 0 12 14"><path d="M.6 .6 H11.4 V8 L6 13.2 L.6 8 Z" fill="#313335" stroke="#5f6163" stroke-width="1.1"/><path d="M3 5.5 H9" stroke="#5f6163" stroke-width="1.1"/></svg>
<svg style="left:526.5px;top:143.5px;" width="12" height="14" viewBox="0 0 12 14"><path d="M.6 .6 H11.4 V8 L6 13.2 L.6 8 Z" fill="#313335" stroke="#5f6163" stroke-width="1.1"/><path d="M3 5.5 H9" stroke="#5f6163" stroke-width="1.1"/></svg>
<svg style="left:526.5px;top:198.5px;" width="12" height="14" viewBox="0 0 12 14"><path d="M.6 .6 H11.4 V8 L6 13.2 L.6 8 Z" fill="#313335" stroke="#5f6163" stroke-width="1.1"/><path d="M3 5.5 H9" stroke="#5f6163" stroke-width="1.1"/></svg>
<svg style="left:526.5px;top:225.5px;" width="12" height="14" viewBox="0 0 12 14"><path d="M.6 .6 H11.4 V8 L6 13.2 L.6 8 Z" fill="#313335" stroke="#5f6163" stroke-width="1.1"/><path d="M3 5.5 H9" stroke="#5f6163" stroke-width="1.1"/></svg>
<svg style="left:526.5px;top:390.5px;" width="12" height="14" viewBox="0 0 12 14"><path d="M.6 .6 H11.4 V8 L6 13.2 L.6 8 Z" fill="#313335" stroke="#5f6163" stroke-width="1.1"/><path d="M3 5.5 H9" stroke="#5f6163" stroke-width="1.1"/></svg>
<svg style="left:526.5px;top:418.5px;" width="12" height="14" viewBox="0 0 12 14"><path d="M.6 .6 H11.4 V8 L6 13.2 L.6 8 Z" fill="#313335" stroke="#5f6163" stroke-width="1.1"/><path d="M3 5.5 H9" stroke="#5f6163" stroke-width="1.1"/></svg>
<svg style="left:526.5px;top:610.5px;" width="12" height="14" viewBox="0 0 12 14"><path d="M.6 .6 H11.4 V8 L6 13.2 L.6 8 Z" fill="#313335" stroke="#5f6163" stroke-width="1.1"/><path d="M3 5.5 H9" stroke="#5f6163" stroke-width="1.1"/></svg>
<svg style="left:526.5px;top:638.5px;" width="12" height="14" viewBox="0 0 12 14"><path d="M.6 .6 H11.4 V8 L6 13.2 L.6 8 Z" fill="#313335" stroke="#5f6163" stroke-width="1.1"/><path d="M3 5.5 H9" stroke="#5f6163" stroke-width="1.1"/></svg>
<svg style="left:526.5px;top:500.5px;" width="12" height="14" viewBox="0 0 12 14"><path d="M.6 13.4 H11.4 V6 L6 .8 L.6 6 Z" fill="#313335" stroke="#5f6163" stroke-width="1.1"/><path d="M3 8.5 H9" stroke="#5f6163" stroke-width="1.1"/></svg>
<svg style="left:526.5px;top:528.5px;" width="12" height="14" viewBox="0 0 12 14"><path d="M.6 13.4 H11.4 V6 L6 .8 L.6 6 Z" fill="#313335" stroke="#5f6163" stroke-width="1.1"/><path d="M3 8.5 H9" stroke="#5f6163" stroke-width="1.1"/></svg>
<svg style="left:526.5px;top:555.5px;" width="12" height="14" viewBox="0 0 12 14"><path d="M.6 13.4 H11.4 V6 L6 .8 L.6 6 Z" fill="#313335" stroke="#5f6163" stroke-width="1.1"/><path d="M3 8.5 H9" stroke="#5f6163" stroke-width="1.1"/></svg>
<svg style="left:526.5px;top:583.5px;" width="12" height="14" viewBox="0 0 12 14"><path d="M.6 13.4 H11.4 V6 L6 .8 L.6 6 Z" fill="#313335" stroke="#5f6163" stroke-width="1.1"/><path d="M3 8.5 H9" stroke="#5f6163" stroke-width="1.1"/></svg>
<svg style="left:526.5px;top:693.5px;" width="12" height="14" viewBox="0 0 12 14"><path d="M.6 13.4 H11.4 V6 L6 .8 L.6 6 Z" fill="#313335" stroke="#5f6163" stroke-width="1.1"/><path d="M3 8.5 H9" stroke="#5f6163" stroke-width="1.1"/></svg>
<span class="t" style="left:540px;top:110.5px;font-size:16.67px;font-family:'Liberation Mono','Noto Sans CJK SC',monospace;"><span style="color:#a9b7c6;">{</span></span>
<span class="t" style="left:560px;top:138.5px;font-size:16.67px;font-family:'Liberation Mono','Noto Sans CJK SC',monospace;"><span style="color:#9876aa;">&quot;app&quot;</span><span style="color:#cc7832;">:</span><span style="color:#a9b7c6;"> {</span></span>
<span class="t" style="left:580px;top:165.5px;font-size:16.67px;font-family:'Liberation Mono','Noto Sans CJK SC',monospace;"><span style="color:#9876aa;">&quot;signingConfigs&quot;</span><span style="color:#cc7832;">:</span><span style="color:#a9b7c6;"> []</span><span style="color:#cc7832;">,</span></span>
<span class="t" style="left:580px;top:193.5px;font-size:16.67px;font-family:'Liberation Mono','Noto Sans CJK SC',monospace;"><span style="color:#9876aa;">&quot;products&quot;</span><span style="color:#cc7832;">:</span><span style="color:#a9b7c6;"> [</span></span>
<span class="t" style="left:600px;top:220.5px;font-size:16.67px;font-family:'Liberation Mono','Noto Sans CJK SC',monospace;"><span style="color:#a9b7c6;">{</span></span>
<svg style="left:1866px;top:116px;" width="17" height="12" viewBox="0 0 17 12"><path d="M1 6 L6 11 L16 1.5" fill="none" stroke="#499c54" stroke-width="3.2"/></svg>
<div style="left:1880px;top:138px;width:9px;height:235px;background:#4b4b4b;"></div>
<div style="left:460px;top:699px;width:1431px;height:30px;background:#313335;"></div>
<div style="left:460px;top:698.5px;width:1431px;height:1px;background:#4a4a4a;"></div>
<span class="t" style="left:473px;top:706px;font-size:16.78px;"><span style="color:#b0b2b4;">app</span></span>
<svg style="left:512px;top:711px;" width="6" height="10" viewBox="0 0 6 10"><path d="M1 1 L5 5 L1 9" fill="none" stroke="#6e7072" stroke-width="1.2"/></svg>
<span class="t" style="left:529px;top:706px;font-size:17.21px;"><span style="color:#b0b2b4;">products</span></span>
<div style="left:1891px;top:72px;width:1px;height:1013px;background:#323537;"></div>
<svg style="left:1897.3px;top:85px;" width="16.4" height="18" viewBox="0 0 20 22"><path d="M2 15 Q4.5 13 4.5 8 Q4.5 2.5 10 2.5 Q15.5 2.5 15.5 8 Q15.5 13 18 15 V16.5 H2 Z" fill="#afb1b3"/><path d="M7.5 18 H12.5 Q12 20.5 10 20.5 Q8 20.5 7.5 18Z" fill="#afb1b3"/><circle cx="15.8" cy="4.4" r="4.2" fill="#e05555"/></svg>
<span class="t" style="left:1859.3px;top:137.5px;width:90px;text-align:center;transform:rotate(90deg);transform-origin:45.0px 10px;font-size:14.8px;color:#bbbbbb;">Notifications</span>
<svg style="left:1895.5px;top:217px;" width="18" height="19" viewBox="0 0 18 19"><circle cx="9" cy="9.5" r="7.6" fill="none" stroke="#afb1b3" stroke-width="1.5"/><path d="M5.5 9.5 H12.5 M9 6 V13 M5.5 6 H12.5 V13 H5.5 Z" fill="none" stroke="#afb1b3" stroke-width="1.3"/><circle cx="2.5" cy="15.5" r="1.8" fill="#afb1b3"/><circle cx="16" cy="15" r="1.8" fill="#afb1b3"/></svg>
<span class="t" style="left:1856.3px;top:276.5px;width:96px;text-align:center;transform:rotate(90deg);transform-origin:48.0px 10px;font-size:12.8px;color:#bbbbbb;">应用与服务体检</span>
<svg style="left:1895.5px;top:361px;" width="18" height="12" viewBox="0 0 18 12"><path d="M0.5 6 Q9 -3.5 17.5 6 Q9 15.5 0.5 6 Z" fill="none" stroke="#afb1b3" stroke-width="1.7"/><circle cx="9" cy="6" r="2.6" fill="#afb1b3"/></svg>
<span class="t" style="left:1883.3px;top:388.5px;width:42px;text-align:center;transform:rotate(90deg);transform-origin:21.0px 10px;font-size:13.2px;color:#bbbbbb;">预览器</span>
<svg style="left:1899.5px;top:929px;" width="10" height="15" viewBox="0 0 10 15"><rect x="0.8" y="0.8" width="8.4" height="13.4" rx="1.5" fill="none" stroke="#afb1b3" stroke-width="1.5"/><path d="M1 2.8 H9" stroke="#afb1b3" stroke-width="1.5"/></svg>
<span class="t" style="left:1842.3px;top:1000.5px;width:124px;text-align:center;transform:rotate(90deg);transform-origin:62.0px 10px;font-size:13.7px;color:#bbbbbb;">Device File Browser</span>
<div style="left:27px;top:728.5px;width:1864px;height:1px;background:#323537;"></div>
<div style="left:27px;top:729.5px;width:1864px;height:33px;background:#3c3f41;"></div>
<div style="left:27px;top:762.5px;width:1864px;height:1px;background:#323537;"></div>
<span class="t" style="left:34.6px;top:737px;font-size:14.32px;"><span style="color:#bbbbbb;"><span style="font-size:15px">构建</span>:</span></span>
<span class="t" style="left:93px;top:737px;font-size:16.5px;"><span style="color:#bbbbbb;"><span style="font-size:15px">同步</span></span></span>
<svg style="left:131px;top:742.5px;" width="10" height="10" viewBox="0 0 10 10"><path d="M0.7999999999999998 0.7999999999999998 L9.2 9.2 M9.2 0.7999999999999998 L0.7999999999999998 9.2" stroke="#6e6e6e" stroke-width="1.2" fill="none"/></svg>
<span class="t" style="left:170px;top:737px;font-size:16.5px;"><span style="color:#bbbbbb;"><span style="font-size:15px">构建输出</span></span></span>
<svg style="left:239px;top:742.5px;" width="10" height="10" viewBox="0 0 10 10"><path d="M0.7999999999999998 0.7999999999999998 L9.2 9.2 M9.2 0.7999999999999998 L0.7999999999999998 9.2" stroke="#6e6e6e" stroke-width="1.2" fill="none"/></svg>
<div style="left:156px;top:759.5px;width:107px;height:3.5px;background:#747a80;"></div>
<svg style="left:1834.5px;top:738px;" width="16" height="16" viewBox="0 0 16 16"><g transform="translate(8,8)"><path d="M-2.1 -8 H2.1 L2.7 -4.4 H-2.7 Z" transform="rotate(0)" fill="#afb1b3"/><path d="M-2.1 -8 H2.1 L2.7 -4.4 H-2.7 Z" transform="rotate(60)" fill="#afb1b3"/><path d="M-2.1 -8 H2.1 L2.7 -4.4 H-2.7 Z" transform="rotate(120)" fill="#afb1b3"/><path d="M-2.1 -8 H2.1 L2.7 -4.4 H-2.7 Z" transform="rotate(180)" fill="#afb1b3"/><path d="M-2.1 -8 H2.1 L2.7 -4.4 H-2.7 Z" transform="rotate(240)" fill="#afb1b3"/><path d="M-2.1 -8 H2.1 L2.7 -4.4 H-2.7 Z" transform="rotate(300)" fill="#afb1b3"/><circle r="5.92" fill="#afb1b3"/><circle r="2.88" fill="#3c3f41"/></g></svg>
<div style="left:1866.5px;top:745px;width:16px;height:2px;background:#afb1b3;"></div>
<div style="left:62.5px;top:763.5px;width:1px;height:321px;background:#323537;"></div>
<div style="left:39px;top:777px;width:12px;height:12px;background:#595b5d;"></div>
<div style="left:33px;top:803.5px;width:24px;height:1px;background:#515355;"></div>
<div style="left:33px;top:843.5px;width:24px;height:1px;background:#515355;"></div>
<svg style="left:37px;top:816px;" width="16" height="16" viewBox="0 0 16 16"><path d="M7 2.2 H1 V15 H13.8 V9.5" fill="none" stroke="#afb1b3" stroke-width="2"/><path d="M5 11 L13.5 2.5 M8.5 1 H15 V7.5" fill="none" stroke="#afb1b3" stroke-width="2.2"/></svg>
<svg style="left:36px;top:856px;" width="18" height="18" viewBox="0 0 18 18"><path d="M10.5 0.5 L17.5 7.5 L15.6 8.6 L13.2 8.2 L9.8 11.6 L10 15 L8.6 16.4 L1.6 9.4 L3 8 L6.4 8.2 L9.8 4.8 L9.4 2.4 Z" fill="#afb1b3" transform="translate(18 0) scale(-1 1) translate(0 0)"/><path d="M12.7 12.7 L17.5 17.5" stroke="#afb1b3" stroke-width="1.8" transform="translate(18 0) scale(-1 1)"/></svg>
<div style="left:64px;top:763.5px;width:456px;height:50px;background:#4b6eaf;"></div>
<svg style="left:69px;top:771px;" width="16" height="12" viewBox="0 0 16 12"><path d="M1 6 L5.5 10.5 L15 1.5" fill="none" stroke="#59b368" stroke-width="3"/></svg>
<span class="t" style="left:90.8px;top:768px;font-size:15.92px;"><span style="color:#cdd0d5;font-weight:bold;">QtProject [assembleHap]:</span><span style="color:#c8ccd2;"> <span style="font-size:15px">成功的</span> <span style="font-size:15px">在</span>2025/1/3 15:46</span></span>
<div style="left:520px;top:763.5px;width:1336px;height:321px;background:#2b2b2b;"></div>
<div style="left:1856px;top:763.5px;width:1px;height:321px;background:#323537;"></div>
<svg style="left:1865px;top:775px;" width="19" height="19" viewBox="0 0 19 19"><path d="M0 1.6 H18.5 M0 8 H14 Q17.8 8 17.8 11.2 Q17.8 14.4 14 14.4 H10" fill="none" stroke="#afb1b3" stroke-width="2.2"/><path d="M11.5 10.2 L6.8 14.4 L11.5 18.6 Z" fill="#afb1b3"/><path d="M0 14.4 H4.5" stroke="#afb1b3" stroke-width="2.2"/></svg>
<div style="left:1844.5px;top:1051px;width:9px;height:33px;background:#4f5152;"></div>
<div style="left:541px;top:790px;width:1300px;height:60px;overflow:hidden">
<span class="t" style="right:346.5px;top:9px;font-size:16.3px;font-family:'Liberation Mono','Noto Sans CJK SC',monospace;"><span style="color:#b6a51e;">&gt; hvigor WARN: The compatibleSdkVersion 5.0.0(12) is lower than the default value in the current project.</span></span>
<span class="t" style="right:216.5px;top:35.5px;font-size:16.3px;font-family:'Liberation Mono','Noto Sans CJK SC',monospace;"><span style="color:#b6a51e;">&gt; hvigor WARN: Please check the products configuration in D:\OpenHarmony\Project\QtProject\build-profile.json5.</span></span>
</div>
<span class="t" style="left:535.5px;top:768px;font-size:15px;font-family:'Liberation Mono','Noto Sans CJK SC',monospace;"><span style="color:#a9b7c6;">&gt;</span></span>
<span class="t" style="left:535.5px;top:796px;font-size:15px;font-family:'Liberation Mono','Noto Sans CJK SC',monospace;"><span style="color:#a9b7c6;">&gt;</span></span>
<span class="t" style="left:535.5px;top:852px;font-size:15px;font-family:'Liberation Mono','Noto Sans CJK SC',monospace;"><span style="color:#a9b7c6;">&gt;</span></span>
<span class="t" style="left:535.5px;top:880px;font-size:15px;font-family:'Liberation Mono','Noto Sans CJK SC',monospace;"><span style="color:#a9b7c6;">&gt;</span></span>
<span class="t" style="left:535.5px;top:907px;font-size:15px;font-family:'Liberation Mono','Noto Sans CJK SC',monospace;"><span style="color:#a9b7c6;">&gt;</span></span>
<div style="left:536px;top:966px;width:4px;height:12px;background:#c8c8c8;"></div>
<div style="left:536px;top:1020px;width:4px;height:13px;background:#3a6fd0;"></div>
<div style="left:0px;top:1084.5px;width:1912px;height:1px;background:#2e3032;"></div>
<div style="left:0px;top:1085.5px;width:1912px;height:28px;background:#3c3f41;"></div>
<div style="left:879px;top:1087px;width:69px;height:26px;background:#2d2f30;"></div>
<svg style="left:43.5px;top:1093px;" width="12" height="15" viewBox="0 0 12 15"><circle cx="2.8" cy="2.6" r="2.6" fill="#afb1b3"/><circle cx="9" cy="4.4" r="2.5" fill="#afb1b3"/><circle cx="2.8" cy="12.6" r="2.4" fill="#afb1b3"/><path d="M2.8 3 V12.5 M9 5 Q9 9.5 3 10.5" fill="none" stroke="#afb1b3" stroke-width="2.1"/></svg>
<span class="t" style="left:63px;top:1089.7px;font-size:16.5px;"><span style="color:#bbbbbb;"><span style="font-size:13.2px">版本控制</span></span></span>
<svg style="left:140.5px;top:1094px;" width="14" height="12" viewBox="0 0 14 12"><path d="M0 1.5 H2.6 M4.4 1.5 H14 M0 6 H2.6 M4.4 6 H14 M0 10.5 H2.6 M4.4 10.5 H14" stroke="#afb1b3" stroke-width="2.1"/></svg>
<span class="t" style="left:160px;top:1091px;font-size:13.6px;"><span style="color:#bbbbbb;">TODO</span></span>
<svg style="left:222.5px;top:1093px;" width="14" height="14" viewBox="0 0 14 14"><circle cx="7" cy="7" r="7" fill="#afb1b3"/><path d="M7 3 V8.2 M7 9.8 V11.6" stroke="#3c3f41" stroke-width="2"/></svg>
<span class="t" style="left:243px;top:1089.7px;font-size:16.5px;"><span style="color:#bbbbbb;"><span style="font-size:13.3px">问题</span></span></span>
<svg style="left:292px;top:1093px;" width="15" height="14" viewBox="0 0 15 14"><rect width="15" height="14" fill="#afb1b3"/><path d="M3 3.5 L6.8 7 L3 10.5 M8 10.8 H12.5" fill="none" stroke="#3c3f41" stroke-width="1.6"/></svg>
<span class="t" style="left:312.6px;top:1089.7px;font-size:16.5px;"><span style="color:#bbbbbb;"><span style="font-size:13.3px">终端</span></span></span>
<svg style="left:361px;top:1092px;" width="16" height="16" viewBox="0 0 16 16"><rect x="0" y="2.5" width="16" height="13.5" fill="#afb1b3"/><path d="M4 0 V4 M12 0 V4" stroke="#afb1b3" stroke-width="2"/><path d="M3 8 H13 M3 11.5 H9" stroke="#3c3f41" stroke-width="1.6"/></svg>
<span class="t" style="left:383px;top:1089.7px;font-size:16.5px;"><span style="color:#bbbbbb;"><span style="font-size:13.3px">日志</span></span></span>
<svg style="left:438px;top:1092px;" width="17" height="16" viewBox="0 0 17 16"><path d="M1 0 V15 H17" fill="none" stroke="#afb1b3" stroke-width="1.6"/><path d="M3.5 11.5 L8 5.5 L11 9 L16 2.5" fill="none" stroke="#afb1b3" stroke-width="1.5"/></svg>
<span class="t" style="left:461px;top:1090.5px;font-size:13.76px;"><span style="color:#bbbbbb;">Operation Analyzer</span></span>
<svg style="left:612px;top:1093px;" width="14" height="15" viewBox="0 0 14 15"><path d="M0 6 L14 0 L9 15 L6.5 8.5 Z" fill="#afb1b3"/></svg>
<span class="t" style="left:633px;top:1090.5px;font-size:14.2px;"><span style="color:#bbbbbb;">Profiler</span></span>
<svg style="left:700px;top:1093px;" width="16" height="15" viewBox="0 0 16 15"><circle cx="6" cy="6" r="4.6" fill="none" stroke="#afb1b3" stroke-width="2"/><path d="M9.5 9.5 L15 14.5" stroke="#afb1b3" stroke-width="2.4"/></svg>
<span class="t" style="left:722px;top:1090.5px;font-size:14.12px;"><span style="color:#bbbbbb;">Code Linter</span></span>
<svg style="left:821px;top:1093px;" width="15" height="15" viewBox="0 0 15 15"><path d="M2.5 3 H12.5 L15 7 L12 14.5 H3 L0 7 Z" fill="#afb1b3"/></svg>
<span class="t" style="left:840px;top:1089.7px;font-size:16.5px;"><span style="color:#bbbbbb;"><span style="font-size:13.3px">服务</span></span></span>
<svg style="left:892px;top:1093px;" width="14" height="15" viewBox="0 0 14 15"><path d="M0 2 L4 0 L13.5 12.5 L10.5 15 L3 5 Z" fill="#afb1b3"/></svg>
<span class="t" style="left:910px;top:1089.7px;font-size:16.5px;"><span style="color:#d8d8d8;"><span style="font-size:13.3px">构建</span></span></span>
<svg style="left:962px;top:1093px;" width="16" height="14" viewBox="0 0 16 14"><rect x="0" y="0" width="7" height="6" fill="#afb1b3"/><rect x="9" y="0" width="7" height="6" fill="#afb1b3"/><rect x="0" y="8" width="16" height="6" fill="#afb1b3"/></svg>
<span class="t" style="left:985px;top:1090.5px;font-size:14.22px;"><span style="color:#bbbbbb;">ArkUI Inspector</span></span>
<div style="left:0px;top:1113.5px;width:1912px;height:1px;background:#4b4d4f;"></div>
<svg style="left:15px;top:1120px;" width="16" height="16" viewBox="0 0 16 16"><path d="M3.8 3.8 H1 V15 H12.2 V12.6" fill="none" stroke="#8f9193" stroke-width="1.4"/><rect x="4" y="0.8" width="11.2" height="11.6" fill="none" stroke="#afb1b3" stroke-width="1.5"/></svg>
<span class="t" style="left:49.2px;top:1117.5px;font-size:16.12px;"><span style="color:#bbbbbb;">Sync project finished in 46 s 353 ms (8 minutes ago)</span></span>
<div style="left:1343.5px;top:1120px;width:15px;height:15px;border-radius:50%;background:#32a332"></div>
<div style="left:1373.5px;top:1120px;width:15px;height:15px;border-radius:50%;background:#32a332"></div>
<span class="t" style="left:1404px;top:1117.5px;font-size:15.67px;"><span style="color:#bbbbbb;">9:36</span></span>
<span class="t" style="left:1450px;top:1117.5px;font-size:13.79px;"><span style="color:#bbbbbb;">CRLF</span></span>
<span class="t" style="left:1501.5px;top:1117.5px;font-size:15.0px;"><span style="color:#bbbbbb;">UTF-8</span></span>
<span class="t" style="left:1559px;top:1117.5px;font-size:15.41px;"><span style="color:#bbbbbb;">2 spaces</span></span>
<span class="t" style="left:1635.7px;top:1117.5px;font-size:16.78px;"><span style="color:#bbbbbb;">JSON: ohos-project-build-profile</span></span>
<svg style="left:1889px;top:1120px;" width="15" height="15" viewBox="0 0 15 15"><rect x="3" y="6.5" width="12" height="8.5" fill="#afb1b3"/><rect x="7" y="9" width="4" height="3.5" fill="#3c3f41"/><path d="M1 6.5 V4 Q1 1 4 1 Q7 1 7 4 V6.5" fill="none" stroke="#afb1b3" stroke-width="1.8"/></svg>
<div style="left:539px;top:241px;width:842px;height:861.5px;background:#3c3f41;border:1px solid #616365;box-sizing:border-box;"></div>
<div style="left:540px;top:242px;width:60px;height:36.5px;background:#4e5254;"></div>
<div style="left:540px;top:278px;width:840px;height:2px;background:#595b5d;"></div>
<div style="left:540px;top:314.8px;width:840px;height:1.2px;background:#5e6062;"></div>
<span class="t" style="left:555px;top:250px;font-size:16.5px;"><span style="color:#bbbbbb;"><span style="font-size:15px">全部</span></span></span>
<span class="t" style="left:614.5px;top:250px;font-size:16.5px;"><span style="color:#bbbbbb;"><span style="font-size:15px">类</span></span></span>
<span class="t" style="left:660px;top:250px;font-size:16.5px;"><span style="color:#bbbbbb;"><span style="font-size:15px">文件</span></span></span>
<span class="t" style="left:719.6px;top:250px;font-size:16.5px;"><span style="color:#bbbbbb;"><span style="font-size:15px">符号</span></span></span>
<span class="t" style="left:780px;top:250px;font-size:16.5px;"><span style="color:#bbbbbb;"><span style="font-size:15px">操作</span></span></span>
<span class="t" style="left:840.4px;top:251px;font-size:16.9px;"><span style="color:#bbbbbb;">Text</span></span>
<div style="left:1156px;top:251px;width:18px;height:18px;background:#43494a;border:1px solid #6b6e70;box-sizing:border-box;border-radius:2px;"></div>
<span class="t" style="left:1180px;top:250px;font-size:15.62px;"><span style="color:#bbbbbb;"><span style="font-size:15px">包括非项目项</span>(N)</span></span>
<svg style="left:1312px;top:252px;" width="16" height="16" viewBox="0 0 16 16"><path d="M0 0.5 H16 L10 8 V15.5 L6 13 V8 Z" fill="#afb1b3"/></svg>
<svg style="left:1345px;top:252px;" width="16" height="16" viewBox="0 0 16 16"><rect x="1" y="1" width="14" height="14" fill="none" stroke="#afb1b3" stroke-width="2"/><rect x="2" y="9" width="7" height="5" fill="#afb1b3"/></svg>
<svg style="left:555px;top:289px;" width="20" height="16" viewBox="0 0 20 16"><circle cx="6.5" cy="6.5" r="5.3" fill="none" stroke="#8a8c8e" stroke-width="1.5"/><path d="M10.3 10.3 L15 15" stroke="#8a8c8e" stroke-width="1.7"/><path d="M13.5 6.5 H19.5 L16.5 9.8 Z" fill="#8a8c8e"/></svg>
<div style="left:587.6px;top:286.3px;width:15.6px;height:20.7px;background:#4a6cb0;"></div>
<span class="t" style="left:588.6px;top:286.3px;font-size:14.6px;"><span style="color:#c4cedf;">ID</span></span>
<div style="left:603px;top:286px;width:1.1px;height:21.5px;background:#c8c8c8;"></div>
<span class="t" style="left:1246.8px;top:288.5px;font-size:16.75px;"><span style="color:#7d7f81;"><span style="font-size:15px">输入</span> / <span style="font-size:15px">以查看命令</span></span></span>
<div style="left:540px;top:316.5px;width:840.5px;height:751.5px;overflow:hidden">
<div style="left:0px;top:360.5px;width:840.5px;height:29px;background:#4b6eaf;"></div>
<span class="t" style="left:37px;top:4.0px;font-size:14.9px;"><span style="color:#bbbbbb;">IDE<span style="font-size:15px">脚本控制台</span></span></span>
<span class="t" style="left:37px;top:33.0px;font-size:14.9px;"><span style="color:#bbbbbb;">IDE <span style="font-size:15px">和项目设置</span></span></span>
<span class="t" style="left:37px;top:62.0px;font-size:16.77px;"><span style="color:#bbbbbb;">Import Word Document...</span></span>
<span class="t" style="left:673.5px;top:62.0px;font-size:16.48px;"><span style="color:#828486;"><span style="font-size:15px">工具</span> | Markdown<span style="font-size:15px">转换器</span></span></span>
<span class="t" style="left:37px;top:90.0px;font-size:16.24px;"><span style="color:#d0d2d4;">Index.d.ts</span></span>
<span class="t" style="left:111.79999999999995px;top:90.0px;font-size:17.31px;"><span style="color:#828486;">entry\src\main\cpp\types\libentry</span></span>
<svg style="left:11px;top:118.30000000000001px;" width="18" height="18" viewBox="0 0 18 18"><circle cx="9" cy="9" r="8.6" fill="#9b80c4"/><text x="9" y="13.2" text-anchor="middle" font-family="Liberation Sans,sans-serif" font-size="12.5" fill="#3b2f52" fill-opacity=".85">p</text></svg>
<span class="t" style="left:37px;top:118.0px;font-size:16.83px;"><span style="color:#c8cacc;">id</span><span style="color:#828486;"> adapter_ts/src/main/ets/common/ComponentModel.ets:17</span></span>
<span class="t" style="right:28.0px;top:118.0px;font-size:16.6px;"><span style="color:#828486;">adapter_ts</span></span>
<svg style="left:819px;top:120.0px;" width="19" height="17" viewBox="0 0 19 17"><path d="M0 0 H6 L8 2.5 H17 V12.5 H0 Z" fill="#87939a"/><rect x="10" y="8" width="9.5" height="9.5" fill="#3c3f41"/><rect x="11.3" y="9.3" width="7.2" height="7.2" fill="#40b6e0"/></svg>
<svg style="left:11px;top:145.3px;" width="18" height="18" viewBox="0 0 18 18"><circle cx="9" cy="9" r="8.6" fill="#b58a3c"/><text x="9" y="13.2" text-anchor="middle" font-family="Liberation Sans,sans-serif" font-size="12.5" fill="#3b2f52" fill-opacity=".85">f</text></svg>
<span class="t" style="left:37px;top:145.0px;font-size:16.86px;"><span style="color:#c8cacc;">id: string</span><span style="color:#828486;"> adapter_ts/src/main/ets/common/ComponentModel.ets:4</span></span>
<span class="t" style="right:28.0px;top:145.0px;font-size:16.6px;"><span style="color:#828486;">adapter_ts</span></span>
<svg style="left:819px;top:147.0px;" width="19" height="17" viewBox="0 0 19 17"><path d="M0 0 H6 L8 2.5 H17 V12.5 H0 Z" fill="#87939a"/><rect x="10" y="8" width="9.5" height="9.5" fill="#3c3f41"/><rect x="11.3" y="9.3" width="7.2" height="7.2" fill="#40b6e0"/></svg>
<svg style="left:11px;top:173.3px;" width="18" height="18" viewBox="0 0 18 18"><circle cx="9" cy="9" r="8.6" fill="#9b80c4"/><text x="9" y="13.2" text-anchor="middle" font-family="Liberation Sans,sans-serif" font-size="12.5" fill="#3b2f52" fill-opacity=".85">p</text></svg>
<span class="t" style="left:37px;top:173.0px;font-size:16.81px;"><span style="color:#c8cacc;">id</span><span style="color:#828486;"> adapter_ts/src/main/ets/components/NodeComponent.ets:10</span></span>
<span class="t" style="right:28.0px;top:173.0px;font-size:16.6px;"><span style="color:#828486;">adapter_ts</span></span>
<svg style="left:819px;top:175.0px;" width="19" height="17" viewBox="0 0 19 17"><path d="M0 0 H6 L8 2.5 H17 V12.5 H0 Z" fill="#87939a"/><rect x="10" y="8" width="9.5" height="9.5" fill="#3c3f41"/><rect x="11.3" y="9.3" width="7.2" height="7.2" fill="#40b6e0"/></svg>
<svg style="left:11px;top:200.29999999999995px;" width="18" height="18" viewBox="0 0 18 18"><circle cx="9" cy="9" r="8.6" fill="#b58a3c"/><text x="9" y="13.2" text-anchor="middle" font-family="Liberation Sans,sans-serif" font-size="12.5" fill="#3b2f52" fill-opacity=".85">f</text></svg>
<span class="t" style="left:37px;top:200.0px;font-size:16.56px;"><span style="color:#c8cacc;">id: string</span><span style="color:#828486;"> entry/src/main/ets/native/QtCore/JsNodeParam.ets:16</span></span>
<span class="t" style="right:28.0px;top:200.0px;font-size:16.6px;"><span style="color:#828486;">entry</span></span>
<svg style="left:819px;top:202.0px;" width="19" height="17" viewBox="0 0 19 17"><path d="M0 0 H6 L8 2.5 H17 V12.5 H0 Z" fill="#87939a"/><rect x="10" y="8" width="9.5" height="9.5" fill="#3c3f41"/><rect x="11.3" y="9.3" width="7.2" height="7.2" fill="#40b6e0"/></svg>
<svg style="left:11px;top:228.29999999999995px;" width="18" height="18" viewBox="0 0 18 18"><circle cx="9" cy="9" r="8.6" fill="#9b80c4"/><text x="9" y="13.2" text-anchor="middle" font-family="Liberation Sans,sans-serif" font-size="12.5" fill="#3b2f52" fill-opacity=".85">p</text></svg>
<span class="t" style="left:37px;top:228.0px;font-size:16.55px;"><span style="color:#c8cacc;">id</span><span style="color:#828486;"> entry/src/main/ets/native/QtCore/JsNodeParam.ets:20</span></span>
<span class="t" style="right:28.0px;top:228.0px;font-size:16.6px;"><span style="color:#828486;">entry</span></span>
<svg style="left:819px;top:230.0px;" width="19" height="17" viewBox="0 0 19 17"><path d="M0 0 H6 L8 2.5 H17 V12.5 H0 Z" fill="#87939a"/><rect x="10" y="8" width="9.5" height="9.5" fill="#3c3f41"/><rect x="11.3" y="9.3" width="7.2" height="7.2" fill="#40b6e0"/></svg>
<svg style="left:11px;top:255.29999999999995px;" width="18" height="18" viewBox="0 0 18 18"><circle cx="9" cy="9" r="8.6" fill="#b58a3c"/><text x="9" y="13.2" text-anchor="middle" font-family="Liberation Sans,sans-serif" font-size="12.5" fill="#3b2f52" fill-opacity=".85">f</text></svg>
<span class="t" style="left:37px;top:255.0px;font-size:16.7px;"><span style="color:#c8cacc;">id: number</span><span style="color:#828486;"> entry/src/main/ets/native/QtCore/JsWindow.ets:14</span></span>
<span class="t" style="right:28.0px;top:255.0px;font-size:16.6px;"><span style="color:#828486;">entry</span></span>
<svg style="left:819px;top:257.0px;" width="19" height="17" viewBox="0 0 19 17"><path d="M0 0 H6 L8 2.5 H17 V12.5 H0 Z" fill="#87939a"/><rect x="10" y="8" width="9.5" height="9.5" fill="#3c3f41"/><rect x="11.3" y="9.3" width="7.2" height="7.2" fill="#40b6e0"/></svg>
<svg style="left:11px;top:283.29999999999995px;" width="18" height="18" viewBox="0 0 18 18"><circle cx="9" cy="9" r="8.6" fill="#9b80c4"/><text x="9" y="13.2" text-anchor="middle" font-family="Liberation Sans,sans-serif" font-size="12.5" fill="#3b2f52" fill-opacity=".85">p</text></svg>
<span class="t" style="left:37px;top:283.0px;font-size:16.74px;"><span style="color:#c8cacc;">id</span><span style="color:#828486;"> entry/src/main/ets/native/QtCore/JsWindow.ets:69</span></span>
<span class="t" style="right:28.0px;top:283.0px;font-size:16.6px;"><span style="color:#828486;">entry</span></span>
<svg style="left:819px;top:285.0px;" width="19" height="17" viewBox="0 0 19 17"><path d="M0 0 H6 L8 2.5 H17 V12.5 H0 Z" fill="#87939a"/><rect x="10" y="8" width="9.5" height="9.5" fill="#3c3f41"/><rect x="11.3" y="9.3" width="7.2" height="7.2" fill="#40b6e0"/></svg>
<svg style="left:11px;top:310.29999999999995px;" width="18" height="18" viewBox="0 0 18 18"><circle cx="9" cy="9" r="8.6" fill="#b58a3c"/><text x="9" y="13.2" text-anchor="middle" font-family="Liberation Sans,sans-serif" font-size="12.5" fill="#3b2f52" fill-opacity=".85">v</text></svg>
<span class="t" style="left:37px;top:310.0px;font-size:16.66px;"><span style="color:#c8cacc;">id</span><span style="color:#828486;"> entry/src/main/ets/native/QtCore/JsWindowManager.ets:27</span></span>
<span class="t" style="right:28.0px;top:310.0px;font-size:16.6px;"><span style="color:#828486;">entry</span></span>
<svg style="left:819px;top:312.0px;" width="19" height="17" viewBox="0 0 19 17"><path d="M0 0 H6 L8 2.5 H17 V12.5 H0 Z" fill="#87939a"/><rect x="10" y="8" width="9.5" height="9.5" fill="#3c3f41"/><rect x="11.3" y="9.3" width="7.2" height="7.2" fill="#40b6e0"/></svg>
<svg style="left:11px;top:338.29999999999995px;" width="18" height="18" viewBox="0 0 18 18"><circle cx="9" cy="9" r="8.6" fill="#9b80c4"/><text x="9" y="13.2" text-anchor="middle" font-family="Liberation Sans,sans-serif" font-size="12.5" fill="#3b2f52" fill-opacity=".85">p</text></svg>
<span class="t" style="left:37px;top:338.0px;font-size:16.79px;"><span style="color:#c8cacc;">id</span><span style="color:#828486;"> entry/src/main/ets/native/QtCore/JsXCompoentNodeController.ets:12</span></span>
<span class="t" style="right:28.0px;top:338.0px;font-size:16.6px;"><span style="color:#828486;">entry</span></span>
<svg style="left:819px;top:340.0px;" width="19" height="17" viewBox="0 0 19 17"><path d="M0 0 H6 L8 2.5 H17 V12.5 H0 Z" fill="#87939a"/><rect x="10" y="8" width="9.5" height="9.5" fill="#3c3f41"/><rect x="11.3" y="9.3" width="7.2" height="7.2" fill="#40b6e0"/></svg>
<svg style="left:12px;top:91.5px;" width="19" height="17" viewBox="0 0 19 17"><path d="M3 5 L7 1 L7 5 Z" fill="#87939a" opacity=".8"/><path d="M8 1 H14 V9 H3 V6 H8 Z" fill="#87939a" opacity=".8"/><rect x="0" y="9.5" width="19" height="7.5" fill="#3d98b8"/><text x="2" y="16.3" font-family="Liberation Sans,sans-serif" font-size="8" font-weight="bold" fill="#1f4e63">TS</text></svg>
<span class="t" style="right:28.0px;top:90.0px;font-size:16.6px;"><span style="color:#828486;">entry</span></span>
<svg style="left:819px;top:92.0px;" width="19" height="17" viewBox="0 0 19 17"><path d="M0 0 H6 L8 2.5 H17 V12.5 H0 Z" fill="#87939a"/><rect x="10" y="8" width="9.5" height="9.5" fill="#3c3f41"/><rect x="11.3" y="9.3" width="7.2" height="7.2" fill="#40b6e0"/></svg>
<span class="t" style="left:37px;top:365.0px;font-size:14.9px;"><span style="color:#dfe3ea;"><span style="font-size:15px">导入产品兼容性</span> </span></span>
<div style="left:145.5px;top:367.20000000000005px;width:15.5px;height:18px;background:#d9b85f;border-radius:2px;"></div>
<span class="t" style="left:146.60000000000002px;top:365.79999999999995px;font-size:14.3px;"><span style="color:#1e1e1e;">ID</span></span>
<span class="t" style="left:37px;top:394.0px;font-size:15.6px;"><span style="color:#bbbbbb;">Zoom IDE (Current: 100%)...</span></span>
<span class="t" style="left:37px;top:452.0px;font-size:14.9px;"><span style="color:#bbbbbb;"><span style="font-size:15px">管理</span> IDE <span style="font-size:15px">设置</span></span></span>
<span class="t" style="left:37px;top:480.0px;font-size:15.13px;"><span style="color:#bbbbbb;">Repair IDE</span></span>
<span class="t" style="left:37px;top:509.0px;font-size:14.9px;"><span style="color:#bbbbbb;"><span style="font-size:15px">重启</span>IDE...</span></span>
<span class="t" style="left:37px;top:538.0px;font-size:14.9px;"><span style="color:#bbbbbb;"><span style="font-size:15px">选择</span>IDE<span style="font-size:15px">的引导</span>Java<span style="font-size:15px">运行时</span>...</span></span>
<span class="t" style="left:37px;top:567.0px;font-size:15.15px;"><span style="color:#bbbbbb;"><span style="font-size:15px">显示</span> HiDPI <span style="font-size:15px">信息</span></span></span>
<span class="t" style="left:37px;top:595.0px;font-size:16.46px;"><span style="color:#bbbbbb;">Run Widget</span></span>
<span class="t" style="left:37px;top:624.0px;font-size:15.93px;"><span style="color:#bbbbbb;">Bidi <span style="font-size:15px">文字基础方向</span></span></span>
<span class="t" style="left:37px;top:653.0px;font-size:16.8px;"><span style="color:#bbbbbb;">Static Widget</span></span>
<span class="t" style="left:37px;top:682.0px;font-size:16.86px;"><span style="color:#bbbbbb;">Version control</span></span>
<span class="t" style="left:765px;top:394.0px;font-size:14.9px;"><span style="color:#828486;"><span style="font-size:15px">视图</span> | <span style="font-size:15px">外观</span></span></span>
<span class="t" style="left:37px;top:423.0px;font-size:15.59px;"><span style="color:#bbbbbb;">Zoom In IDE</span></span>
<span class="t" style="left:128.60000000000002px;top:423.5px;font-size:14.6px;"><span style="color:#8c8e90;font-weight:bold;">Alt+Shift+=</span></span>
<svg style="left:12px;top:654.0px;" width="17" height="17" viewBox="0 0 17 17"><rect x="0" y="0" width="7.5" height="7.5" fill="#9aa7b0"/><rect x="9" y="0" width="8" height="10.5" fill="#9aa7b0"/><rect x="0" y="9" width="7.5" height="8" fill="#9aa7b0"/><rect x="9" y="12" width="8" height="5" fill="#9aa7b0"/></svg>
<svg style="left:12px;top:712.0px;" width="16" height="16" viewBox="0 0 16 16"><rect x=".7" y=".7" width="14.6" height="14.6" fill="none" stroke="#9a9c9e" stroke-width="1.4"/><path d="M4 4.5 H12 M8 4.5 V12.5" stroke="#9a9c9e" stroke-width="1.6"/></svg>
<svg style="left:12px;top:740.0px;" width="16" height="16" viewBox="0 0 16 16"><rect x=".7" y=".7" width="14.6" height="14.6" fill="none" stroke="#9a9c9e" stroke-width="1.4"/><path d="M4 4.5 H12 M8 4.5 V12.5" stroke="#9a9c9e" stroke-width="1.6"/></svg>
<span class="t" style="left:37px;top:710.0px;font-size:16.04px;"><span style="color:#828486;">* @brief Provides graphics APIs of XEngine.</span></span>
<span class="t" style="left:638.8px;top:710.0px;font-size:15.78px;"><span style="color:#828486;">xeg_gles_adaptive_vrs.h 9</span></span>
<span class="t" style="left:37px;top:738.0px;font-size:16.1px;"><span style="color:#828486;">* @brief Sets the INPUT_SIZE parameter of the {@link HMS_XEG_AdaptiveVRSParameter}</span></span>
<div style="left:595px;top:735.5px;width:245px;height:20px;background:linear-gradient(90deg,rgba(60,63,65,0) 0,#3c3f41 24px);"></div>
<span class="t" style="left:630.7px;top:738.0px;font-size:15.74px;"><span style="color:#828486;">xeg_gles_adaptive_vrs.h 38</span></span>
<div style="left:829px;top:0.5px;width:9.5px;height:390px;background:rgba(140,140,140,.35);"></div>
</div>
<svg style="left:551.8px;top:350.8px;" width="16.4" height="16.4" viewBox="0 0 16.4 16.4"><g transform="translate(8.2,8.2)"><path d="M-2.1 -8.2 H2.1 L2.7 -4.51 H-2.7 Z" transform="rotate(0)" fill="#afb1b3"/><path d="M-2.1 -8.2 H2.1 L2.7 -4.51 H-2.7 Z" transform="rotate(60)" fill="#afb1b3"/><path d="M-2.1 -8.2 H2.1 L2.7 -4.51 H-2.7 Z" transform="rotate(120)" fill="#afb1b3"/><path d="M-2.1 -8.2 H2.1 L2.7 -4.51 H-2.7 Z" transform="rotate(180)" fill="#afb1b3"/><path d="M-2.1 -8.2 H2.1 L2.7 -4.51 H-2.7 Z" transform="rotate(240)" fill="#afb1b3"/><path d="M-2.1 -8.2 H2.1 L2.7 -4.51 H-2.7 Z" transform="rotate(300)" fill="#afb1b3"/><circle r="6.068" fill="#afb1b3"/><circle r="2.9519999999999995" fill="#3c3f41"/></g></svg>
<span class="t" style="left:1170px;top:1076px;font-size:16.35px;"><span style="color:#589df6;">Assign Shortcut</span></span>
<span class="t" style="left:1292.5px;top:1076px;font-size:16.54px;"><span style="color:#a0a2a4;">Alt+Enter</span></span>
<div style="left:536px;top:679px;width:847px;height:37px;border:5px solid #e81c1f;box-sizing:border-box;"></div>
</body></html>
